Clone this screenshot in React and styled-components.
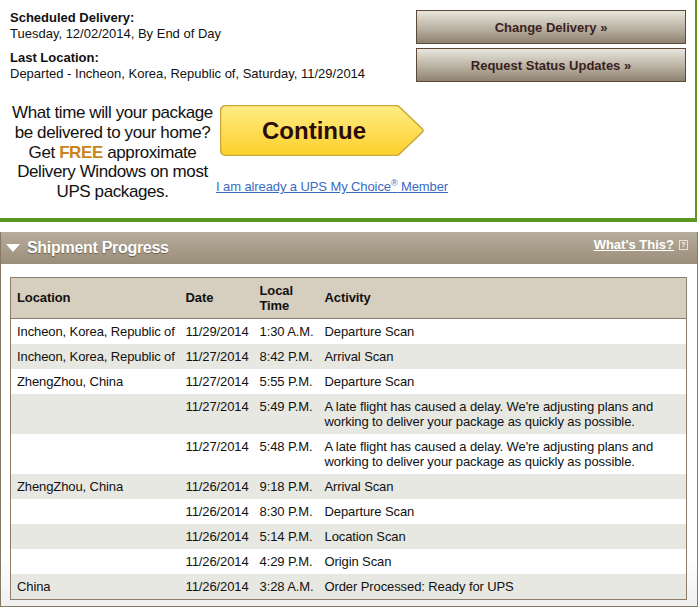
import React from 'react';
import styled, { createGlobalStyle } from 'styled-components';

const GlobalStyle = createGlobalStyle`
  body {
    margin: 0;
    background: #fff;
    font-family: "Liberation Sans", Arial, Helvetica, sans-serif;
    color: #111;
  }
`;

const Page = styled.div`
  width: 699px;
`;

const Top = styled.div`
  width: 697px;
  box-sizing: border-box;
  display: flex;
  border-right: 2px solid #5b9620;
  border-bottom: 4px solid #5b9620;
`;

const LeftCol = styled.div`
  flex: 1;
  min-width: 0;
  padding: 10px 0 16px 10px;
`;

const InfoGroup = styled.div`
  font-size: 13px;
  line-height: 16px;
  margin-bottom: 8px;
`;

const InfoLabel = styled.div`
  font-weight: bold;
`;

const Promo = styled.div`
  display: flex;
  margin-top: 21px;
`;

const PromoText = styled.div`
  width: 205px;
  flex-shrink: 0;
  text-align: center;
  font-size: 17px;
  line-height: 19.8px;
  letter-spacing: -0.4px;
  white-space: nowrap;
`;

const Free = styled.span`
  color: #c8861a;
  font-weight: bold;
`;

const Cta = styled.div`
  padding-top: 2px;
  margin-left: 1px;
  display: flex;
  flex-direction: column;
`;

const ContinueBtn = styled.button`
  position: relative;
  width: 204px;
  height: 51px;
  margin-left: 4px;
  padding: 0 36px 0 0;
  border: 0;
  background: none;
  cursor: pointer;
  font-family: inherit;
  font-size: 24px;
  font-weight: bold;
  color: #2a0c0c;
`;

const ContinueShape = styled.svg`
  position: absolute;
  left: 0;
  top: 0;
`;

const ContinueLabel = styled.span`
  position: relative;
  top: 0;
  left: 10px;
`;

const MemberLink = styled.a`
  margin-top: 23px;
  font-size: 13px;
  line-height: 16px;
  color: #3a6bc4;
  text-decoration: underline;
  white-space: nowrap;
  letter-spacing: -0.1px;

  sup {
    font-size: 9px;
    line-height: 0;
  }
`;

const ButtonCol = styled.div`
  width: 270px;
  flex-shrink: 0;
  margin: 10px 9px 0 0;
  display: flex;
  flex-direction: column;
  gap: 4px;
`;

const BrownButton = styled.button`
  height: 34px;
  border: 1px solid #5c4a35;
  background: linear-gradient(#e8e6dd, #b9b1a2 55%, #8e8270);
  font-family: inherit;
  font-size: 13px;
  font-weight: bold;
  color: #3b1f1f;
  cursor: pointer;
`;

const Panel = styled.div`
  margin-top: 10px;
  width: 698px;
  box-sizing: border-box;
  border: 1px solid #857865;
  border-top: 0;
`;

const PanelHead = styled.div`
  height: 32px;
  display: flex;
  justify-content: space-between;
  background: linear-gradient(#b7ad9b, #9a8e7a);
  color: #fff;
`;

const Title = styled.div`
  display: flex;
  align-items: center;
  gap: 7px;
  padding-left: 5px;
  font-size: 16px;
  font-weight: bold;
  letter-spacing: -0.3px;
  text-shadow: 0 1px 1px rgba(60, 45, 30, 0.55);
`;

const HelpLink = styled.div`
  display: flex;
  align-items: flex-start;
  gap: 5px;
  padding: 5px 9px 0 0;
  font-size: 13px;
  font-weight: bold;

  a {
    color: #fff;
    text-decoration: underline;
  }
`;

const HelpBox = styled.span`
  margin-top: 3px;
  width: 7px;
  height: 8px;
  border: 1px solid #e6e0d6;
  font-size: 7px;
  line-height: 8px;
  text-align: center;
  font-weight: bold;
`;

const PanelBody = styled.div`
  padding: 13px 10px 6px 9px;
  background: linear-gradient(#fff 85%, #f0f0f0);
`;

const Table = styled.table`
  width: 100%;
  table-layout: fixed;
  border-collapse: collapse;
  border: 1px solid #8b7d69;
  font-size: 13px;
  line-height: 15px;
  letter-spacing: -0.1px;
`;

const Th = styled.th`
  text-align: left;
  padding: 5px 6px;
  background: #d6cebf;
  border-bottom: 1px solid #8b7d69;
  vertical-align: middle;
`;

const Row = styled.tr`
  background: ${p => (p.$alt ? '#e8e8e2' : '#fff')};
`;

const Td = styled.td`
  padding: 5px 6px;
  vertical-align: top;
  white-space: ${p => (p.$wrap ? 'normal' : 'nowrap')};
`;

const rows = [
  ['Incheon, Korea, Republic of', '11/29/2014', '1:30 A.M.', 'Departure Scan'],
  ['Incheon, Korea, Republic of', '11/27/2014', '8:42 P.M.', 'Arrival Scan'],
  ['ZhengZhou, China', '11/27/2014', '5:55 P.M.', 'Departure Scan'],
  ['', '11/27/2014', '5:49 P.M.', "A late flight has caused a delay. We're adjusting plans and working to deliver your package as quickly as possible."],
  ['', '11/27/2014', '5:48 P.M.', "A late flight has caused a delay. We're adjusting plans and working to deliver your package as quickly as possible."],
  ['ZhengZhou, China', '11/26/2014', '9:18 P.M.', 'Arrival Scan'],
  ['', '11/26/2014', '8:30 P.M.', 'Departure Scan'],
  ['', '11/26/2014', '5:14 P.M.', 'Location Scan'],
  ['', '11/26/2014', '4:29 P.M.', 'Origin Scan'],
  ['China', '11/26/2014', '3:28 A.M.', 'Order Processed: Ready for UPS'],
];

const App = () => (
  <Page>
    <GlobalStyle />
    <Top>
      <LeftCol>
        <InfoGroup>
          <InfoLabel>Scheduled Delivery:</InfoLabel>
          <div>Tuesday, 12/02/2014, By End of Day</div>
        </InfoGroup>
        <InfoGroup>
          <InfoLabel>Last Location:</InfoLabel>
          <div>Departed - Incheon, Korea, Republic of, Saturday, 11/29/2014</div>
        </InfoGroup>
        <Promo>
          <PromoText>
            What time will your package<br />
            be delivered to your home?<br />
            Get <Free>FREE</Free> approximate<br />
            Delivery Windows on most<br />
            UPS packages.
          </PromoText>
          <Cta>
            <ContinueBtn>
              <ContinueShape width="204" height="51" viewBox="0 0 204 51">
                <defs>
                  <linearGradient id="cg" x1="0" y1="0" x2="0" y2="1">
                    <stop offset="0" stopColor="#ffec85" />
                    <stop offset="1" stopColor="#fdd02a" />
                  </linearGradient>
                </defs>
                <path
                  d="M6.5 0.5 H176 Q178 0.5 179.5 2 L202.5 24 Q203.5 25.5 202.5 27 L179.5 49 Q178 50.5 176 50.5 H6.5 Q0.5 50.5 0.5 44.5 V6.5 Q0.5 0.5 6.5 0.5 Z"
                  fill="url(#cg)"
                  stroke="#c9a83c"
                  strokeWidth="1.5"
                />
              </ContinueShape>
              <ContinueLabel>Continue</ContinueLabel>
            </ContinueBtn>
            <MemberLink href="#">
              I am already a UPS My Choice<sup>®</sup> Member
            </MemberLink>
          </Cta>
        </Promo>
      </LeftCol>
      <ButtonCol>
        <BrownButton>Change Delivery »</BrownButton>
        <BrownButton>Request Status Updates »</BrownButton>
      </ButtonCol>
    </Top>

    <Panel>
      <PanelHead>
        <Title>
          <svg width="14" height="8" viewBox="0 0 14 8">
            <path d="M0 0 H14 L7 8 Z" fill="#fff" />
          </svg>
          Shipment Progress
        </Title>
        <HelpLink>
          <a href="#">What's This?</a>
          <HelpBox>?</HelpBox>
        </HelpLink>
      </PanelHead>
      <PanelBody>
        <Table>
          <colgroup>
            <col style={{ width: 169 }} />
            <col style={{ width: 74 }} />
            <col style={{ width: 65 }} />
            <col />
          </colgroup>
          <thead>
            <tr>
              <Th>Location</Th>
              <Th>Date</Th>
              <Th>Local<br />Time</Th>
              <Th>Activity</Th>
            </tr>
          </thead>
          <tbody>
            {rows.map((r, i) => (
              <Row key={i} $alt={i % 2 === 1}>
                {r.map((c, j) => (
                  <Td key={j} $wrap={j === 3}>{c}</Td>
                ))}
              </Row>
            ))}
          </tbody>
        </Table>
      </PanelBody>
    </Panel>
  </Page>
);

export default App;
